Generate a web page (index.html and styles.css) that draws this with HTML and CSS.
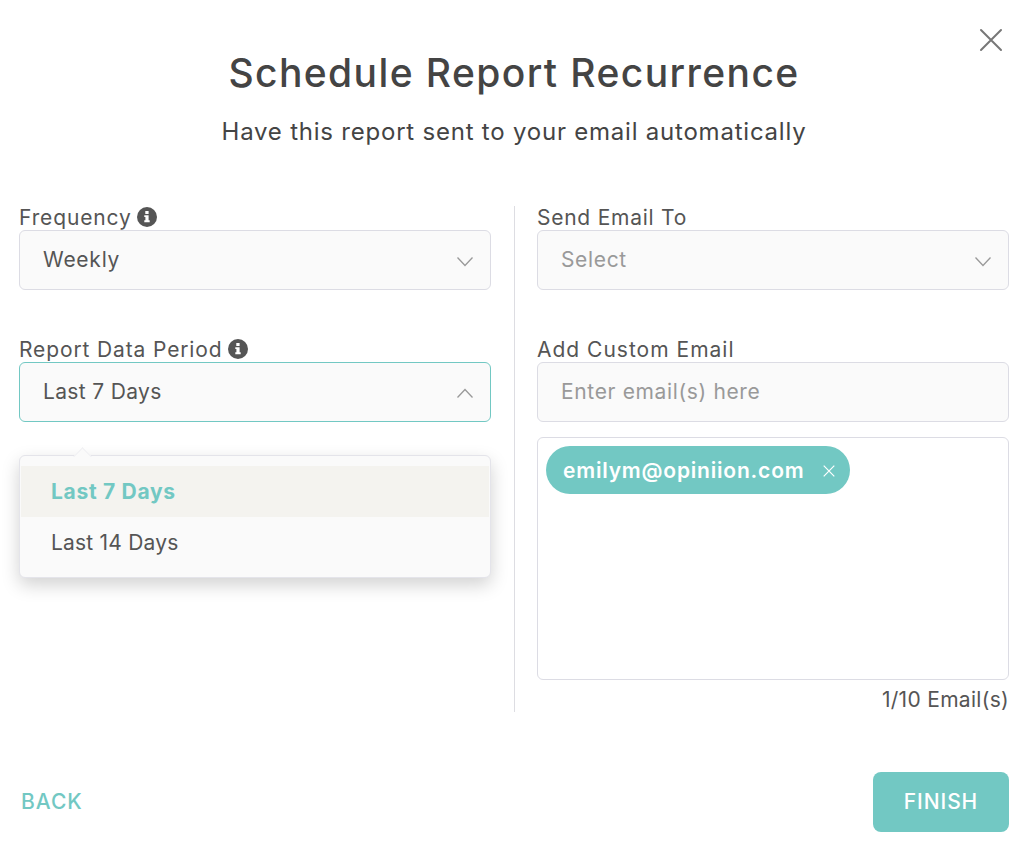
FILE: index.html
```html
<!DOCTYPE html>
<html lang="en">
<head>
  <meta charset="UTF-8">
  <title>Schedule Report Recurrence</title>
  <meta name="viewport" content="width=device-width, initial-scale=1.0">
  <link rel="stylesheet" href="styles.css">
</head>
<body>

  <div class="modal">
    <button class="close-btn" aria-label="Close">
      <svg width="24" height="24" viewBox="0 0 24 24"><path d="M2 2l20 20M22 2L2 22"/></svg>
    </button>

    <h1>Schedule Report Recurrence</h1>
    <p class="subtitle">Have this report sent to your email automatically</p>

    <div class="columns">
      <!-- Left column -->
      <div class="column">
        <div class="field">
          <div class="label">
            <span>Frequency</span>
            <svg class="info" width="20" height="20" viewBox="0 0 20 20"><circle cx="10" cy="10" r="10"/><path d="M8.3 4.1h3.3v3H8.3zM7.3 8.2h4.3v5.1h1.1v1.9H7.3v-1.9h1.1v-3.2H7.3z"/></svg>
          </div>
          <div class="select">
            <span>Weekly</span>
            <svg class="arrow" width="18" height="12" viewBox="0 0 18 12"><path d="M1.5 1.5L9 9.5l7.5-8"/></svg>
          </div>
        </div>

        <div class="field">
          <div class="label">
            <span>Report Data Period</span>
            <svg class="info" width="20" height="20" viewBox="0 0 20 20"><circle cx="10" cy="10" r="10"/><path d="M8.3 4.1h3.3v3H8.3zM7.3 8.2h4.3v5.1h1.1v1.9H7.3v-1.9h1.1v-3.2H7.3z"/></svg>
          </div>
          <div class="select open">
            <span>Last 7 Days</span>
            <svg class="arrow" width="18" height="12" viewBox="0 0 18 12"><path d="M1.5 9.5L9 1.5l7.5 8"/></svg>
            <div class="dropdown">
              <div class="option selected">Last 7 Days</div>
              <div class="option">Last 14 Days</div>
            </div>
          </div>
        </div>
      </div>

      <div class="divider"></div>

      <!-- Right column -->
      <div class="column">
        <div class="field">
          <div class="label send-label"><span>Send Email To</span></div>
          <div class="select placeholder">
            <span>Select</span>
            <svg class="arrow" width="18" height="12" viewBox="0 0 18 12"><path d="M1.5 1.5L9 9.5l7.5-8"/></svg>
          </div>
        </div>

        <div class="field">
          <div class="label custom-label"><span>Add Custom Email</span></div>
          <div class="select placeholder"><span>Enter email(s) here</span></div>
          <div class="email-list">
            <div class="tag">
              <span>emilym@opiniion.com</span>
              <svg width="12" height="12" viewBox="0 0 12 12"><path d="M.7.7l10.6 10.6M11.3.7L.7 11.3"/></svg>
            </div>
          </div>
          <div class="count">1/10 Email(s)</div>
        </div>
      </div>
    </div>

    <div class="footer">
      <button class="back-btn">BACK</button>
      <button class="finish-btn">FINISH</button>
    </div>
  </div>

</body>
</html>
```
FILE: styles.css
```css
* {
  box-sizing: border-box;
}

body {
  margin: 0;
  background: #fff;
  color: #555;
  font-family: Inter, sans-serif;
  font-size: 21px;
}

.modal {
  position: relative;
  height: 856px;
  padding: 48px 23px 0 19px;
}

button {
  padding: 0;
  border: none;
  background: none;
  font-family: inherit;
  font-size: 21px;
  cursor: pointer;
}

.close-btn {
  position: absolute;
  top: 28px;
  right: 29px;
  height: 24px;
}

.close-btn svg {
  display: block;
  fill: none;
  stroke: #777;
  stroke-width: 2;
  stroke-linecap: round;
}

h1 {
  margin: 0;
  color: #444;
  font-size: 39px;
  font-weight: 500;
  line-height: 50px;
  letter-spacing: 1.4px;
  text-align: center;
}

.subtitle {
  margin: 18px 0 0;
  color: #444;
  font-size: 24px;
  line-height: 32px;
  letter-spacing: 0.78px;
  text-align: center;
}

.columns {
  display: flex;
  justify-content: space-between;
  height: 506px;
  margin-top: 58px;
}

.column {
  width: 472px;
}

.divider {
  width: 1px;
  background: #dddde2;
}

.field {
  margin-bottom: 48px;
}

.label {
  display: flex;
  align-items: center;
  gap: 5px;
  height: 24px;
  padding-bottom: 2px;
  letter-spacing: 0.87px;
  white-space: nowrap;
}

.send-label {
  letter-spacing: 0.75px;
}

.custom-label {
  letter-spacing: 1px;
}

.info {
  fill: #555;
}

.info path {
  fill: #fff;
}

.select {
  position: relative;
  display: flex;
  align-items: center;
  justify-content: space-between;
  height: 60px;
  padding: 0 16px 2px 23px;
  border: 1px solid #dcdce4;
  border-radius: 6px;
  background: #fafafa;
  letter-spacing: 0.75px;
}

.select.open {
  border-color: #72c8c3;
  letter-spacing: 0.35px;
}

.select.placeholder {
  color: #999;
  letter-spacing: 0.65px;
}

.arrow {
  margin-top: 5px;
  fill: none;
  stroke: #999;
  stroke-width: 1.3;
}

.dropdown {
  position: absolute;
  top: 92px;
  left: -1px;
  width: 472px;
  height: 123px;
  padding: 10px 1px;
  border: 1px solid #e4e4ea;
  border-radius: 6px;
  background: #fafafa;
  box-shadow: 0 7px 18px rgba(0, 0, 0, 0.18);
}

.dropdown::before {
  content: "";
  position: absolute;
  top: -6px;
  left: 56px;
  width: 12px;
  height: 12px;
  border-top: 1px solid #f0f0f3;
  border-left: 1px solid #f0f0f3;
  background: #fafafa;
  transform: rotate(45deg);
}

.option {
  position: relative;
  height: 51px;
  padding-left: 30px;
  line-height: 51px;
  letter-spacing: 0.2px;
}

.option.selected {
  background: #f4f3ef;
  color: #72c8c3;
  font-weight: 700;
  letter-spacing: 0.7px;
}

.email-list {
  height: 243px;
  margin-top: 15px;
  padding: 8px;
  border: 1px solid #dcdce4;
  border-radius: 6px;
}

.tag {
  display: flex;
  align-items: center;
  justify-content: space-between;
  width: 304px;
  height: 48px;
  padding: 0 15px 0 17px;
  border-radius: 24px;
  background: #72c8c3;
  color: #fff;
  font-weight: 600;
  letter-spacing: 0.8px;
}

.tag svg {
  margin-top: 2px;
  fill: none;
  stroke: #fff;
  stroke-width: 1.2;
}

.count {
  margin-top: 8px;
  line-height: 24px;
  letter-spacing: 0.3px;
  text-align: right;
}

.footer {
  display: flex;
  align-items: center;
  justify-content: space-between;
  margin-top: 60px;
}

.back-btn {
  padding: 0 0 2px 2px;
  color: #72c8c3;
  font-weight: 500;
  letter-spacing: 1px;
}

.finish-btn {
  width: 136px;
  height: 60px;
  padding-bottom: 2px;
  border-radius: 8px;
  background: #72c8c3;
  color: #fff;
  font-weight: 500;
  letter-spacing: 0.9px;
}
```
